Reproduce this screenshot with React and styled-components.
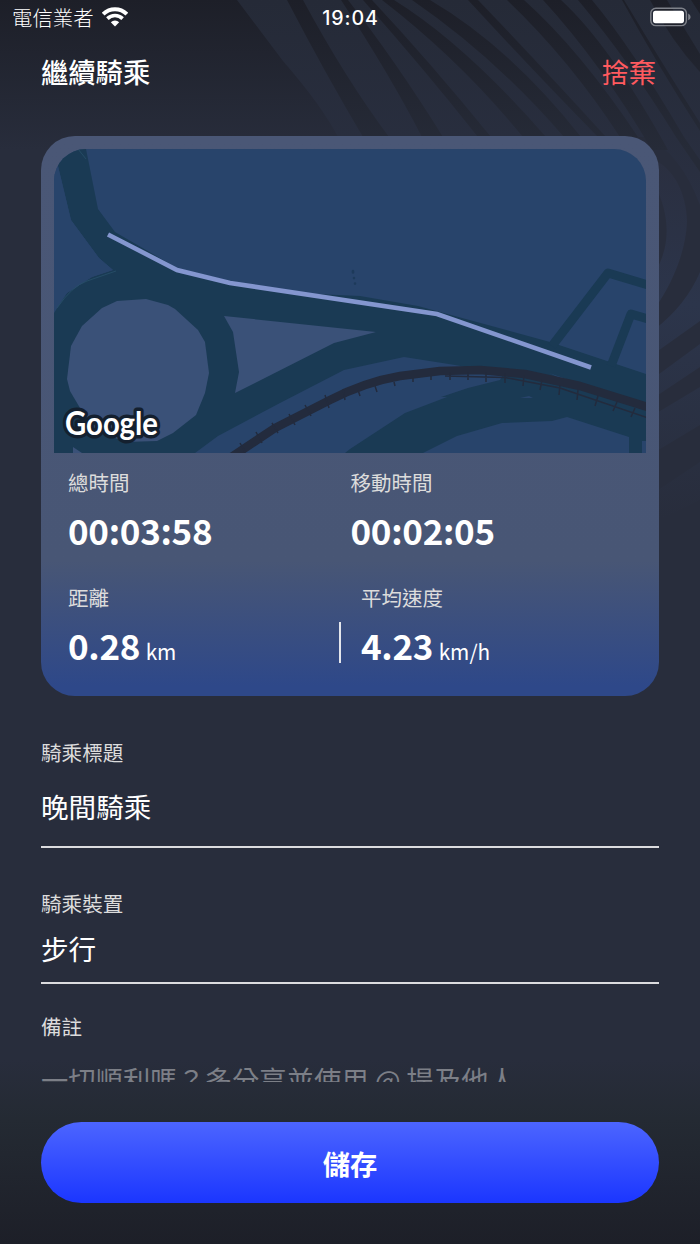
import React from 'react';
import styled, { createGlobalStyle } from 'styled-components';

const GlobalStyle = createGlobalStyle`
  * {
    box-sizing: border-box;
  }
  body {
    margin: 0;
    background: #282d3c;
    font-family: 'Noto Sans CJK TC', 'Noto Sans', sans-serif;
    color: #fff;
  }
  h1, p, dl, dt, dd {
    margin: 0;
    font-weight: inherit;
    font-size: inherit;
  }
`;

const Screen = styled.div`
  position: relative;
  isolation: isolate;
  width: 700px;
  height: 1244px;
  overflow: hidden;
  display: flex;
  flex-direction: column;
  background: linear-gradient(
    to bottom,
    #1d1f28 0,
    #282d3c 150px,
    #282d3c 1060px,
    #242a33 1120px,
    #1d1f28 1244px
  );
`;

const Backdrop = styled.svg`
  position: absolute;
  top: 0;
  left: 0;
  z-index: -1;
`;

const StatusBar = styled.div`
  height: 36px;
  padding: 0 9px 0 12px;
  display: grid;
  grid-template-columns: 1fr auto 1fr;
  align-items: center;
`;

const Carrier = styled.div`
  display: flex;
  align-items: center;
  gap: 8px;
  padding-bottom: 2px;
  font-size: 20.4px;
  font-weight: 300;
  line-height: 34px;
`;

const Clock = styled.time`
  margin-right: 2px;
  font-family: Inter, sans-serif;
  font-size: 19.6px;
  font-weight: 500;
  letter-spacing: 0.9px;
`;

const BatteryIcon = styled.svg`
  justify-self: end;
  margin-bottom: 2px;
`;

const Header = styled.header`
  height: 99.5px;
  padding: 15px 44px 0 41px;
  display: flex;
  justify-content: space-between;
  align-items: flex-start;
  line-height: 40px;
  font-size: 27.3px;
`;

const Title = styled.h1`
  font-weight: 500;
`;

const DiscardButton = styled.button`
  border: 0;
  padding: 0;
  background: none;
  color: #ff5a5f;
  font: inherit;
`;

const Card = styled.section`
  height: 560.5px;
  flex-shrink: 0;
  margin: 0 41px;
  padding: 13.5px 13.5px 0 13px;
  border-radius: 34px;
  background: linear-gradient(#4a5776 0, #485675 425px, #2e4889 550px);
`;

const MapView = styled.svg`
  display: block;
  width: 100%;
  height: 304px;
  border-radius: 32px 32px 0 0;
`;

const MapLogo = styled.text`
  font-family: Lato, sans-serif;
  font-size: 32px;
  font-weight: 700;
  fill: #fff;
  stroke: #14202f;
  stroke-width: 7px;
  stroke-linejoin: round;
  paint-order: stroke;
`;

const StatRow = styled.dl`
  display: flex;
  align-items: flex-end;
  padding: ${({ $second }) => ($second ? '31px 0 0 14px' : '14px 0 0 14px')};
`;

const Stat = styled.div`
  width: ${({ $width }) => $width || 'auto'};
`;

const StatLabel = styled.dt`
  font-size: 20.5px;
  line-height: 30px;
  color: #dcdcdc;
`;

const StatValue = styled.dd`
  margin-top: 13px;
  padding-bottom: 1px;
  font-size: 35px;
  font-weight: 700;
  line-height: 40px;
  letter-spacing: -0.3px;
  white-space: nowrap;
`;

const Unit = styled.span`
  margin-left: 5.5px;
  font-size: 20.8px;
  font-weight: 400;
  letter-spacing: 0;
`;

const Divider = styled.span`
  width: 2px;
  height: 41px;
  margin: 0 20px 9px 0;
  background: #e4e6ec;
`;

const Form = styled.form`
  height: 385.5px;
  flex-shrink: 0;
  overflow: hidden;
  padding: 0 41px;
`;

const Field = styled.label`
  display: block;
  padding-top: ${({ $top }) => $top}px;
  padding-bottom: ${({ $bottom }) => $bottom || 0}px;
  border-bottom: ${({ $line }) => ($line ? '2px solid #dcdcdf' : '0')};
`;

const FieldLabel = styled.span`
  display: block;
  font-size: 20.6px;
  line-height: 30px;
  color: #dcdcdc;
`;

const FieldText = styled.span`
  display: block;
  padding-top: ${({ $gap }) => $gap}px;
  font-size: ${({ $muted }) => ($muted ? '27.3px' : '27.6px')};
  line-height: 40px;
  white-space: nowrap;
  color: ${({ $muted }) => ($muted ? '#7c7f87' : '#fff')};
`;

const Footer = styled.footer`
  padding: 40.5px 41px 0;
`;

const SaveButton = styled.button`
  display: block;
  width: 100%;
  height: 81px;
  border: 0;
  border-radius: 41px;
  padding: 1px 0 0;
  background: linear-gradient(#4c65ff, #1b36ff);
  color: #fff;
  font-family: inherit;
  font-size: 27.3px;
  font-weight: 700;
`;

// dark gaps cut into the lighter wave at the top of the screen
const GAPS = [
  'M287 0 L303 0 Q345 78 389 137 L363 137 Q325 73 287 0Z',
  'M341 0 L348 0 Q395 60 443 137 L422 137 Q390 75 341 0Z',
  'M363 0 L372 0 Q430 62 491 137 L478 137 Q425 70 363 0Z',
  'M382 0 L394 0 Q465 44 546 137 L523 137 Q460 60 382 0Z',
  'M412 0 L430 0 Q510 47 581 137 L564 137 Q495 57 412 0Z',
  'M468 0 L478 0 Q545 70 606 137 L598 137 Q540 78 468 0Z',
  'M507 0 L524 0 Q580 50 638 137 L620 137 Q570 60 507 0Z',
  'M543 0 L561 0 Q610 45 668 150 L652 150 Q600 62 543 0Z',
  'M578 0 L592 0 Q632 48 684 137 L700 160 L700 172 L676 137 Q630 62 578 0Z',
  'M622 0 L624 0 Q660 60 700 123 L700 131 Q658 66 622 0Z',
  'M650 0 L667 0 L700 54 L700 72 Q672 42 650 0Z',
  'M691 0 L700 0 L700 14Z',
];

const SIDE_BANDS = [
  'M655 160 C678 172 687 200 687 222 C686 250 673 283 655 308 L655 272 C671 246 670 215 655 185Z',
  'M700 272 Q686 305 655 329 L655 353 L700 321Z',
  'M700 344 L655 377 L655 397 L700 367Z',
  'M700 387 L655 414 L655 452 L700 425Z',
  'M700 462 L655 492 L655 523 L700 500Z',
];

const Waves = () => (
  <Backdrop width="700" height="1244" viewBox="0 0 700 1244">
    <defs>
      <linearGradient id="base" gradientUnits="userSpaceOnUse" x1="0" y1="0" x2="0" y2="150">
        <stop offset="0" stopColor="#1d1f28" />
        <stop offset="1" stopColor="#262b38" />
      </linearGradient>
      <linearGradient id="wave" gradientUnits="userSpaceOnUse" x1="0" y1="0" x2="0" y2="210">
        <stop offset="0" stopColor="#252a37" />
        <stop offset="1" stopColor="#2a3042" />
      </linearGradient>
      <linearGradient id="side" gradientUnits="userSpaceOnUse" x1="0" y1="160" x2="0" y2="520">
        <stop offset="0" stopColor="#2a2f40" />
        <stop offset="0.4" stopColor="#2c354b" />
        <stop offset="1" stopColor="#282d3c" />
      </linearGradient>
    </defs>
    <path
      d="M237 0 L283 61 Q322 106 338 137 L645 137 Q680 152 700 205 L700 0Z"
      fill="url(#wave)"
    />
    {GAPS.map((d) => (
      <path key={d} d={d} fill="url(#base)" />
    ))}
    {SIDE_BANDS.map((d) => (
      <path key={d} d={d} fill="url(#side)" />
    ))}
  </Backdrop>
);

const WifiIcon = () => (
  <svg width="26" height="20" viewBox="0 0 26 20" fill="none">
    <path d="M1.2 7.1a16.8 16.8 0 0 1 23.6 0" stroke="#fff" strokeWidth="3.8" />
    <path d="M5.4 11.6a10.8 10.8 0 0 1 15.2 0" stroke="#fff" strokeWidth="3.6" />
    <path d="M13 19.4l-4.2-4.2a6 6 0 0 1 8.4 0z" fill="#fff" />
  </svg>
);

const Battery = () => (
  <BatteryIcon width="41" height="20" viewBox="0 0 41 20">
    <rect x="0.8" y="1.2" width="35.6" height="17.4" rx="5" fill="none" stroke="#7f828a" strokeWidth="1.4" />
    <rect x="3" y="3.8" width="31" height="12.4" rx="2.6" fill="#fff" />
    <path d="M38.2 6.6q2.4 1.2 2.4 3.3t-2.4 3.3z" fill="#7f828a" />
  </BatteryIcon>
);

const RAIL_TIES =
  'M240 443l5 9M256 432l6 11M272 423l6 10M289 414l6 11M305 405l6 11M325 395l4 13M343 389l2 11M358 390l2 6M375 386l2 6M394 382l1 4M413 378v4M431 376v4';
const SIDING_TIES =
  'M450 372v8M468 372v8M486 372v10M505 373v10M524 375l-1 11M542 380l-2 10M560 385l-1 10M578 390l-1 10M598 396l-3 10M617 402l-4 9M635 408l-4 9';

const RideMap = () => (
  <MapView viewBox="54 149 591.5 304" preserveAspectRatio="none">
    <rect x="54" y="149" width="592" height="304" fill="#28446b" />
    <path
      d="M54 149H86L98 209L115 232L177 268L230 281L315 294L360 296L418 306L440 312L550 342L646 374V453H54V310L67 293L92 277L113 270L99 258L71 220L58 166Z"
      fill="#1a3a54"
    />
    <path d="M54 152L58 166L71 220L99 258L113 270L92 277L67 293L54 313Z" fill="#28446b" />
    <path
      d="M195 453L218 436L280 403L344 370L404 357L455 365L503 374L500 380L468 388L444 396L441 397H447L405 413L350 449L345 453Z"
      fill="#28446b"
    />
    <path d="M423 453L457 436L502 423L552 421L567 417L629 437V453Z" fill="#28446b" />
    <path d="M642 441H646V453H642ZM520 398L529 396L533 398ZM549 373L572 381L562 379Z" fill="#28446b" />
    <path
      d="M117 301L146 299L168 305L175 309L198 330L205 342L209 373L205 393L196 415L173 433L157 441L125 442L96 430L80 408L70 391L67 379L71 346L82 326L102 308Z"
      fill="#3a5178"
    />
    <path d="M224 316L376 332L334 343L235 393L239 372L233 332Z" fill="#3a5178" />
    <path d="M73 447L82 453H73Z" fill="#3a5178" />
    <path d="M57 308Q72 286 87 281L116 271M78 149l8 10" fill="none" stroke="#28506a" strokeWidth="0.8" />
    <path
      d="M552 346L608 273L648 285M611 366L631 314L648 319"
      fill="none"
      stroke="#1a3a54"
      strokeWidth="9"
      strokeLinejoin="round"
    />
    <path
      d="M353 271v1.5M354 278v.1M355 283.5v.1"
      stroke="#1d3a5a"
      strokeWidth="2.6"
      strokeLinecap="round"
    />
    <path
      d="M230 458L275 428L330 400Q365 382 400 376L440 371L480 370L525 374L580 386L648 407"
      fill="none"
      stroke="#232b3d"
      strokeWidth="8.6"
      strokeLinejoin="round"
    />
    <path
      d={`${RAIL_TIES}${SIDING_TIES}M445 376L505 377.5L560 388L648 418`}
      fill="none"
      stroke="#232b3d"
      strokeWidth="1.5"
    />
    <path
      d="M108 234.5L177 270L230 283L437 314L591 367.5"
      fill="none"
      stroke="#8496cf"
      strokeWidth="4.6"
    />
    <MapLogo x="65" y="434.5" textLength="93" lengthAdjust="spacingAndGlyphs">
      Google
    </MapLogo>
  </MapView>
);

const App = () => (
  <>
    <GlobalStyle />
    <Screen>
      <Waves />
      <StatusBar>
        <Carrier>
          電信業者
          <WifiIcon />
        </Carrier>
        <Clock>19:04</Clock>
        <Battery />
      </StatusBar>
      <Header>
        <Title>繼續騎乘</Title>
        <DiscardButton type="button">捨棄</DiscardButton>
      </Header>
      <Card>
        <RideMap />
        <StatRow>
          <Stat $width="282.5px">
            <StatLabel>總時間</StatLabel>
            <StatValue>00:03:58</StatValue>
          </Stat>
          <Stat>
            <StatLabel>移動時間</StatLabel>
            <StatValue>00:02:05</StatValue>
          </Stat>
        </StatRow>
        <StatRow $second>
          <Stat $width="271px">
            <StatLabel>距離</StatLabel>
            <StatValue>
              0.28<Unit>km</Unit>
            </StatValue>
          </Stat>
          <Divider />
          <Stat>
            <StatLabel>平均速度</StatLabel>
            <StatValue>
              4.23<Unit>km/h</Unit>
            </StatValue>
          </Stat>
        </StatRow>
      </Card>
      <Form>
        <Field $top={41} $bottom={20} $line>
          <FieldLabel>騎乘標題</FieldLabel>
          <FieldText $gap={19}>晚間騎乘</FieldText>
        </Field>
        <Field $top={40} $bottom={14} $line>
          <FieldLabel>騎乘裝置</FieldLabel>
          <FieldText $gap={10}>步行</FieldText>
        </Field>
        <Field $top={27}>
          <FieldLabel>備註</FieldLabel>
          <FieldText $gap={18} $muted>
            一切順利嗎？多分享並使用 @ 提及他人
          </FieldText>
        </Field>
      </Form>
      <Footer>
        <SaveButton type="button">儲存</SaveButton>
      </Footer>
    </Screen>
  </>
);

export default App;
